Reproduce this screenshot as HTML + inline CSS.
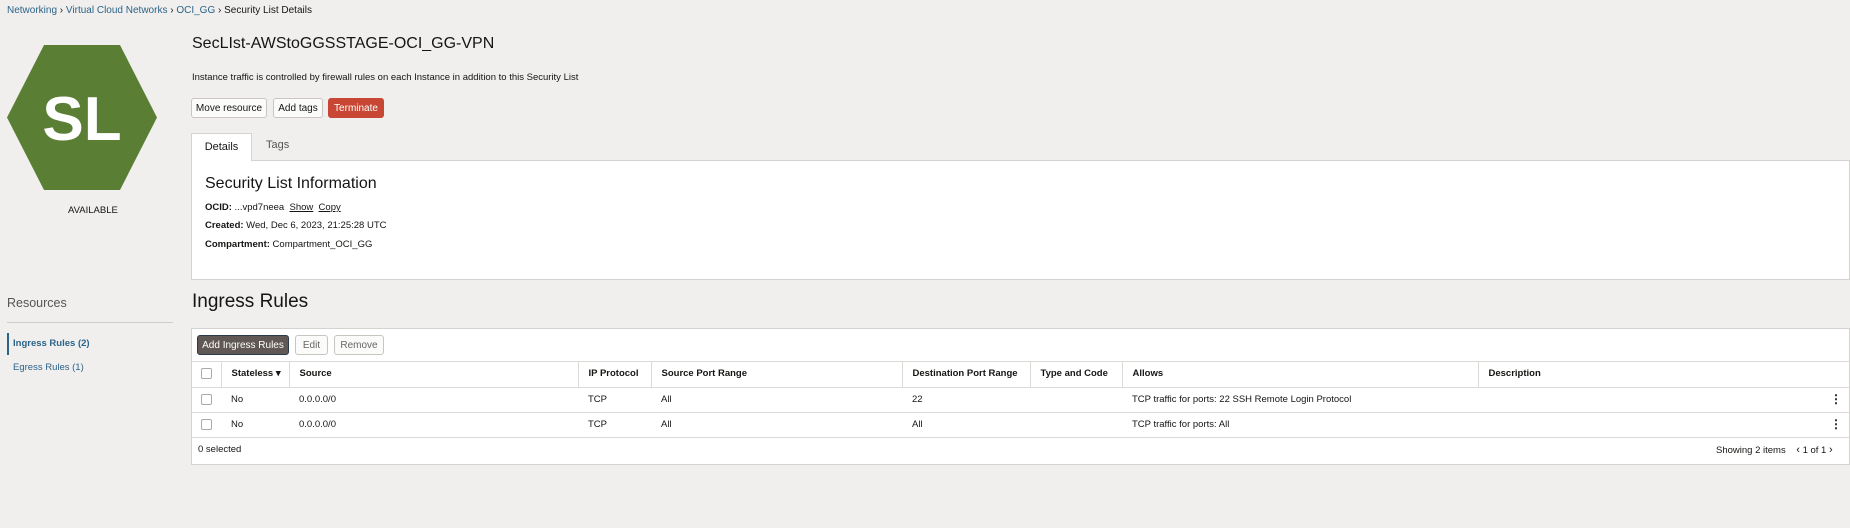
<!DOCTYPE html>
<html><head><meta charset="utf-8"><style>
*{box-sizing:border-box;margin:0;padding:0}
body{width:1850px;height:528px;background:#f0efed;font-family:"Liberation Sans",sans-serif;color:#161513;position:relative;overflow:hidden;font-size:11px}
.a{position:absolute;white-space:nowrap}
.lnk{color:#2b6389;text-decoration:none}
.btn{position:absolute;height:20px;border:1px solid #c9c6c2;background:#fbfbfa;border-radius:3px;font-size:10px;display:flex;align-items:center;justify-content:center;color:#161513}
table{border-collapse:collapse;position:absolute;left:191px;top:361px;width:1659px;font-size:9.5px}
td,th{height:25px;padding:0 0 0 10px;text-align:left;border-bottom:1px solid #dcdad7;vertical-align:middle}
th{font-weight:bold;height:26px;border-left:1px solid #dcdad7}
th:first-child{border-left:none}
.cb{display:inline-block;width:11px;height:11px;border:1px solid #aaa;border-radius:2px;background:#fff;vertical-align:middle}
.dots{position:absolute;right:8px;top:4px;font-weight:bold;font-size:12px;line-height:14px}
</style></head><body>
<div class="a" style="left:7px;top:5px;font-size:10px"><span class="lnk">Networking</span> › <span class="lnk">Virtual Cloud Networks</span> › <span class="lnk">OCI_GG</span> › Security List Details</div>
<svg class="a" style="left:7px;top:45px" width="150" height="145" viewBox="0 0 150 145"><polygon points="37,0 113,0 150,72.5 113,145 37,145 0,72.5" fill="#5a7f34"/><text x="75" y="95" text-anchor="middle" font-family="Liberation Sans" font-weight="bold" font-size="62" fill="#fff">SL</text></svg>
<div class="a" style="left:68px;top:205px;font-size:9.5px">AVAILABLE</div>
<div class="a" style="left:192px;top:35px;font-size:16px">SecLIst-AWStoGGSSTAGE-OCI_GG-VPN</div>
<div class="a" style="left:192px;top:72px;font-size:9.5px">Instance traffic is controlled by firewall rules on each Instance in addition to this Security List</div>
<div class="btn" style="left:191px;top:98px;width:76px">Move resource</div>
<div class="btn" style="left:273px;top:98px;width:50px">Add tags</div>
<div class="btn" style="left:328px;top:98px;width:56px;background:#c74634;border-color:#c74634;color:#fff">Terminate</div>
<div class="a" style="left:191px;top:133px;width:61px;height:28px;background:#fff;border:1px solid #d5d3d0;border-bottom:none;font-size:11px;line-height:26px;text-align:center">Details</div>
<div class="a" style="left:266px;top:139px;font-size:11px;color:#555">Tags</div>
<div class="a" style="left:191px;top:160px;width:1659px;height:120px;background:#fff;border:1px solid #d5d3d0"></div>
<div class="a" style="left:192px;top:159px;width:59px;height:3px;background:#fff"></div>
<div class="a" style="left:205px;top:175px;font-size:16px">Security List Information</div>
<div class="a" style="left:205px;top:202px;font-size:9.5px"><b>OCID:</b> ...vpd7neea &nbsp;<u>Show</u> &nbsp;<u>Copy</u></div>
<div class="a" style="left:205px;top:220px;font-size:9.5px"><b>Created:</b> Wed, Dec 6, 2023, 21:25:28 UTC</div>
<div class="a" style="left:205px;top:239px;font-size:9.5px"><b>Compartment:</b> Compartment_OCI_GG</div>
<div class="a" style="left:7px;top:296px;font-size:12.5px;color:#555">Resources</div>
<div class="a" style="left:7px;top:322px;width:166px;height:1px;background:#ccc"></div>
<div class="a" style="left:7px;top:333px;width:2px;height:22px;background:#2b6389"></div>
<div class="a lnk" style="left:13px;top:338px;font-size:9.5px;font-weight:bold">Ingress Rules (2)</div>
<div class="a lnk" style="left:13px;top:362px;font-size:9.5px">Egress Rules (1)</div>
<div class="a" style="left:192px;top:291px;font-size:19px">Ingress Rules</div>
<div class="a" style="left:191px;top:328px;width:1659px;height:137px;background:#fff;border:1px solid #d5d3d0"></div>
<div class="btn" style="left:197px;top:335px;width:92px;background:#5f5854;color:#fff;border:1px solid #2b3a4a">Add Ingress Rules</div>
<div class="btn" style="left:295px;top:335px;width:33px;color:#666">Edit</div>
<div class="btn" style="left:334px;top:335px;width:50px;color:#666">Remove</div>
<div class="a" style="left:191px;top:361px;width:1659px;height:1px;background:#dcdad7"></div>
<table>
<colgroup><col style="width:30px"><col style="width:68px"><col style="width:289px"><col style="width:73px"><col style="width:251px"><col style="width:128px"><col style="width:92px"><col style="width:356px"><col></colgroup>
<tr><th><span class="cb"></span></th><th>Stateless ▾</th><th>Source</th><th>IP Protocol</th><th>Source Port Range</th><th>Destination Port Range</th><th>Type and Code</th><th>Allows</th><th>Description</th></tr>
<tr><td><span class="cb"></span></td><td>No</td><td>0.0.0.0/0</td><td>TCP</td><td>All</td><td>22</td><td></td><td>TCP traffic for ports: 22 SSH Remote Login Protocol</td><td style="position:relative"><span class="dots">⋮</span></td></tr>
<tr><td><span class="cb"></span></td><td>No</td><td>0.0.0.0/0</td><td>TCP</td><td>All</td><td>All</td><td></td><td>TCP traffic for ports: All</td><td style="position:relative"><span class="dots">⋮</span></td></tr>
</table>
<div class="a" style="left:198px;top:444px;font-size:9.5px">0 selected</div>
<div class="a" style="left:1716px;top:444px;font-size:9.5px">Showing 2 items &nbsp;&nbsp;&nbsp;<span style="font-size:11px">&lsaquo;</span> 1 of 1 <span style="font-size:11px">&rsaquo;</span></div>
</body></html>
